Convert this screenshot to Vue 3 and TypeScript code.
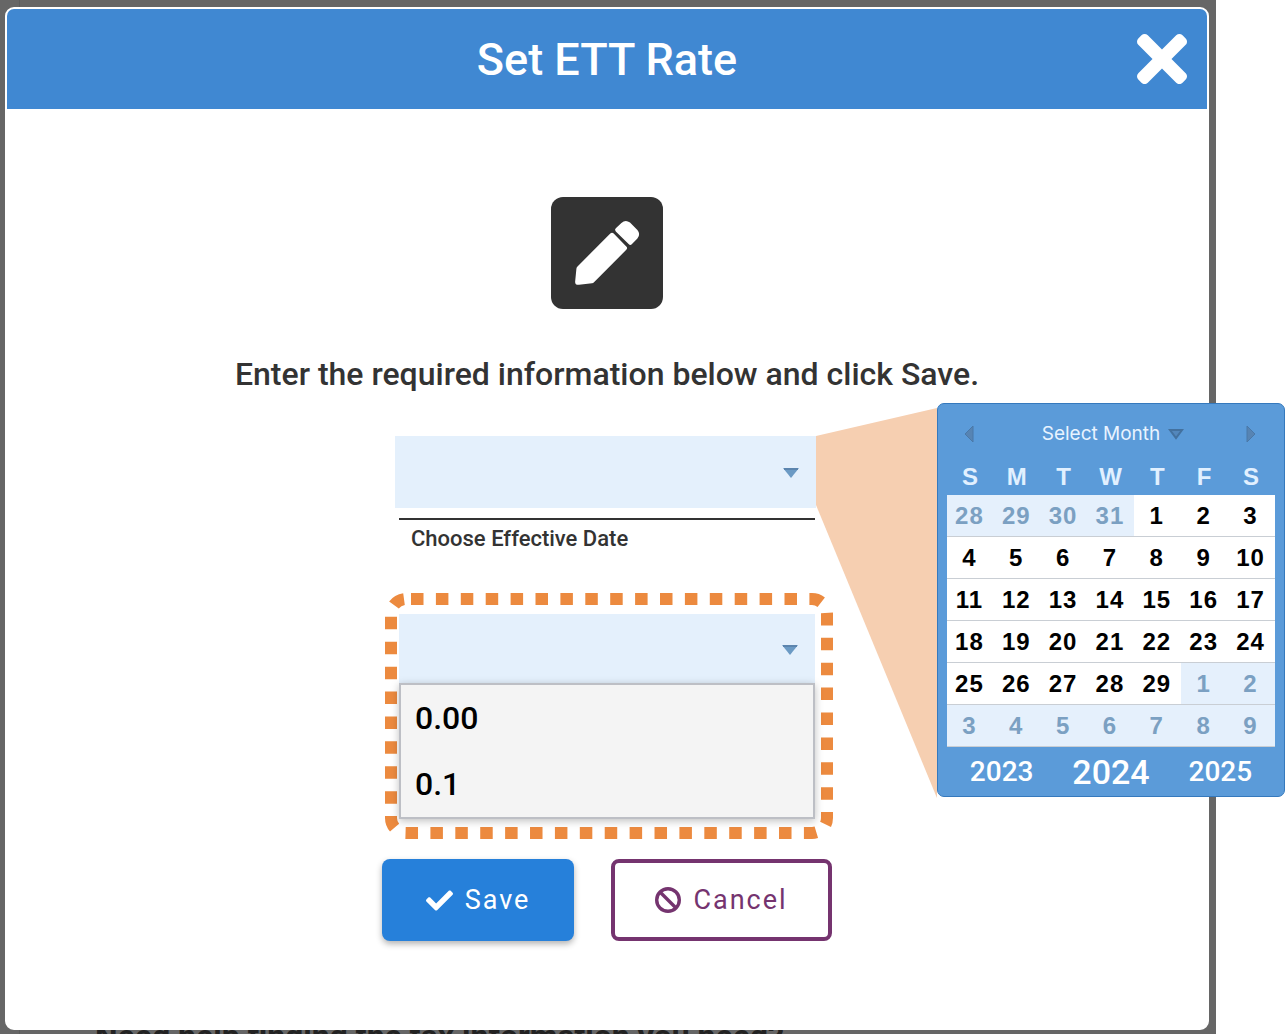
<script setup lang="ts">
import { ref } from 'vue'

interface Day {
  n: number
  out: boolean
}

const weekdays: string[] = ['S', 'M', 'T', 'W', 'T', 'F', 'S']
const years: number[] = [2023, 2024, 2025]
const rates: string[] = ['0.00', '0.1']

const effectiveDate = ref('')
const selectedRate = ref('')
const selectedYear = ref(2024)

const range = (from: number, to: number, out: boolean): Day[] =>
  Array.from({ length: to - from + 1 }, (_, i) => ({ n: from + i, out }))

const days: Day[] = [...range(28, 31, true), ...range(1, 29, false), ...range(1, 9, true)]
const weeks: Day[][] = Array.from({ length: 6 }, (_, w) => days.slice(w * 7, w * 7 + 7))

function pickDay(day: Day): void {
  if (!day.out) effectiveDate.value = `2/${day.n}/${selectedYear.value}`
}
</script>

<template>
  <div class="screen">
    <div class="backdrop">
      <section class="modal" role="dialog" aria-labelledby="modal-title">
        <header class="modal-header">
          <h1 id="modal-title">Set ETT Rate</h1>
          <button class="close" type="button" aria-label="Close">
            <svg viewBox="0 80 352 352" width="50" height="50" aria-hidden="true">
              <path
                fill="#fff"
                d="M242.72 256l100.07-100.07c12.28-12.28 12.28-32.19 0-44.48l-22.24-22.24c-12.28-12.28-32.19-12.28-44.48 0L176 189.28 75.93 89.21c-12.28-12.28-32.19-12.28-44.48 0L9.21 111.45c-12.28 12.28-12.28 32.19 0 44.48L109.28 256 9.21 356.07c-12.28 12.28-12.28 32.19 0 44.48l22.24 22.24c12.28 12.28 32.2 12.28 44.48 0L176 322.72l100.07 100.07c12.28 12.28 32.2 12.28 44.48 0l22.24-22.24c12.28-12.28 12.28-32.19 0-44.48L242.72 256z"
              />
            </svg>
          </button>
        </header>

        <form class="modal-body" @submit.prevent>
          <svg class="edit-icon" viewBox="0 0 112 112" width="112" height="112" aria-hidden="true">
            <rect width="112" height="112" rx="12" fill="#333" />
            <path
              fill="#fff"
              d="M59.3 36.6Q61 34.9 62.7 36.6L75.3 49.4Q77 51.1 75.3 52.8L43 85.2Q42.2 86 41 86.2L28 87.8Q23.6 88.2 24.2 84L25.4 71.8Q25.5 70.4 26.5 69.4Z"
            />
            <path
              fill="#fff"
              d="M64.8 34.4Q63.2 32.8 64.8 31.2L70.4 26Q74.6 22 79 25.6L86.4 33Q90 37.4 86.4 41.5L81 47.1Q79.3 48.8 77.6 47.1Z"
            />
          </svg>
          <p class="prompt">Enter the required information below and click Save.</p>

          <div class="date-group">
            <div class="date-field">
              <input id="effective-date" v-model="effectiveDate" class="control" type="text" readonly />
              <svg class="caret" viewBox="0 0 16 10" width="16" height="10" aria-hidden="true">
                <path d="M0 0H16L8 10Z" fill="#6b9ac4" />
                <path d="M1 1H15" stroke="#5c85ae" stroke-width="2" />
              </svg>

              <svg class="callout" viewBox="0 0 121 395" width="121" height="395" aria-hidden="true">
                <path d="M0 33L121 5V395L0 102Z" fill="#f6cfb1" />
              </svg>

              <div class="calendar">
                <div class="calendar-bar">
                  <button type="button" aria-label="Previous month">
                    <svg viewBox="0 0 10 18" width="10" height="18" aria-hidden="true">
                      <path d="M9 1V17L1 9Z" fill="#5784b3" stroke="#4a78a8" />
                    </svg>
                  </button>
                  <button class="month" type="button">
                    Select Month
                    <svg viewBox="0 0 16 11" width="16" height="11" aria-hidden="true">
                      <path d="M2 1H14L8 9Z" fill="#5387bc" stroke="#43719f" stroke-width="2" />
                    </svg>
                  </button>
                  <button type="button" aria-label="Next month">
                    <svg viewBox="0 0 10 18" width="10" height="18" aria-hidden="true">
                      <path d="M1 1V17L9 9Z" fill="#5784b3" stroke="#4a78a8" />
                    </svg>
                  </button>
                </div>
                <table class="days">
                  <thead>
                    <tr>
                      <th v-for="(d, i) in weekdays" :key="i" scope="col">{{ d }}</th>
                    </tr>
                  </thead>
                  <tbody>
                    <tr v-for="(week, w) in weeks" :key="w">
                      <td v-for="(day, i) in week" :key="i" :class="{ out: day.out }" @click="pickDay(day)">
                        {{ day.n }}
                      </td>
                    </tr>
                  </tbody>
                </table>
                <div class="years">
                  <button
                    v-for="y in years"
                    :key="y"
                    type="button"
                    :class="{ current: y === selectedYear }"
                    @click="selectedYear = y"
                  >
                    {{ y }}
                  </button>
                </div>
              </div>
            </div>
            <label class="date-label" for="effective-date">Choose Effective Date</label>
          </div>

          <div class="rate-group">
            <svg class="highlight" viewBox="0 0 448 246" width="448" height="246" aria-hidden="true">
              <path
                d="M26 6H427A15 15 0 0 1 442 21V225A15 15 0 0 1 427 240H21A15 15 0 0 1 6 225V21A15 15 0 0 1 19 6.1"
                fill="none"
                stroke="#ec8a3f"
                stroke-width="12"
                stroke-dasharray="12.5 12.4"
              />
            </svg>
            <div class="rate-field">
              <select v-model="selectedRate" class="control" aria-label="ETT rate">
                <option value=""></option>
                <option v-for="r in rates" :key="r" :value="r">{{ r }}</option>
              </select>
              <svg class="caret" viewBox="0 0 16 10" width="16" height="10" aria-hidden="true">
                <path d="M0 0H16L8 10Z" fill="#6b9ac4" />
                <path d="M1 1H15" stroke="#5c85ae" stroke-width="2" />
              </svg>
            </div>
            <ul class="rate-list" role="listbox" aria-label="ETT rates">
              <li v-for="r in rates" :key="r" role="option" :aria-selected="r === selectedRate" @click="selectedRate = r">
                {{ r }}
              </li>
            </ul>
          </div>

          <div class="actions">
            <button class="btn save" type="submit">
              <svg viewBox="0 0 512 512" width="27" height="27" aria-hidden="true">
                <path
                  fill="#fff"
                  d="M173.898 439.404l-166.4-166.4c-9.997-9.997-9.997-26.206 0-36.204l36.203-36.204c9.997-9.998 26.207-9.998 36.204 0L192 312.69 432.095 72.596c9.997-9.997 26.207-9.997 36.204 0l36.203 36.204c9.997 9.997 9.997 26.206 0 36.204l-294.4 294.401c-9.998 9.997-26.207 9.997-36.204-.001z"
                />
              </svg>
              <span>Save</span>
            </button>
            <button class="btn cancel" type="button">
              <svg viewBox="0 0 26 26" width="26" height="26" aria-hidden="true">
                <circle cx="13" cy="13" r="11.3" fill="none" stroke="#75346f" stroke-width="3.4" />
                <path d="M5 5L21 21" stroke="#75346f" stroke-width="3.4" />
              </svg>
              <span>Cancel</span>
            </button>
          </div>
        </form>
      </section>
      <p class="page-text">Need help finding the tax information you need?</p>
    </div>
  </div>
</template>

<style>
body {
  margin: 0;
  background: #fff;
}
</style>

<style scoped>
.screen {
  height: 100vh;
  overflow: hidden;
  font-family: Roboto, 'Liberation Sans', sans-serif;
  color: #333;
}

button {
  margin: 0;
  padding: 0;
  border: 0;
  background: none;
  font-family: inherit;
  color: inherit;
  cursor: pointer;
}

svg {
  display: block;
}

.backdrop {
  box-sizing: border-box;
  min-height: 100vh;
  margin-right: 70px;
  padding: 7px 7px 0 5px;
  background: linear-gradient(90deg, transparent 19px, #5c5c5c 19px, #5c5c5c 20px, transparent 20px), #666;
}

.modal {
  position: relative;
  z-index: 1;
  border: 2px solid #fff;
  border-radius: 9px;
  background: #fff;
}

.modal-header {
  display: grid;
  grid-template-columns: 90px 1fr 90px;
  align-items: center;
  height: 100px;
  border-radius: 7px 7px 0 0;
  background: #4088d2;
  color: #fff;
}

.modal-header h1 {
  grid-column: 2;
  margin: 0;
  padding-top: 2px;
  font-size: 45px;
  font-weight: 500;
  line-height: 60px;
  text-align: center;
}

.close {
  justify-self: center;
}

.modal-body {
  display: flex;
  flex-direction: column;
  align-items: center;
  padding: 88px 0 87px;
}

.prompt {
  margin: 45px 0 42px;
  font-size: 32px;
  font-weight: 500;
  line-height: 40px;
  text-align: center;
}

.date-group,
.rate-group {
  position: relative;
  width: 416px;
}

.date-field {
  position: relative;
  height: 72px;
  margin: 0 -1px 10px -4px;
}

.rate-field {
  position: relative;
  height: 69px;
}

.control {
  display: block;
  box-sizing: border-box;
  width: 100%;
  height: 100%;
  margin: 0;
  padding: 0 48px 0 16px;
  border: 0;
  border-radius: 0;
  outline: 0;
  appearance: none;
  background: #e4f0fc;
  font-family: inherit;
  font-size: 32px;
  font-weight: 500;
  color: #000;
}

.caret {
  position: absolute;
  top: 50%;
  right: 17px;
  margin-top: -4px;
}

.date-label {
  display: block;
  padding-left: 12px;
  border-top: 2px solid #333;
  font-size: 22px;
  font-weight: 500;
  line-height: 38px;
}

.rate-group {
  margin-top: 56px;
}

.highlight {
  position: absolute;
  top: -21px;
  left: -14px;
  pointer-events: none;
}

.rate-list {
  position: relative;
  box-sizing: border-box;
  margin: 0;
  padding: 0;
  border: 2px solid #bdbfc5;
  background: #f4f4f4;
  box-shadow: 0 2px 8px rgba(0, 0, 0, 0.25);
  list-style: none;
}

.rate-list li {
  padding-left: 14px;
  font-size: 32px;
  font-weight: 500;
  line-height: 66px;
  color: #000;
  cursor: pointer;
}

.actions {
  display: flex;
  gap: 37px;
  margin-top: 40px;
}

.btn {
  display: flex;
  box-sizing: border-box;
  align-items: center;
  justify-content: center;
  gap: 12px;
  height: 82px;
  border-radius: 8px;
  font-size: 27px;
  letter-spacing: 2px;
}

.save {
  width: 192px;
  background: #2680da;
  box-shadow: 0 3px 6px rgba(0, 0, 0, 0.3);
  color: #fff;
}

.cancel {
  width: 221px;
  border: 4px solid #75346f;
  background: #fff;
  color: #75346f;
}

.callout {
  position: absolute;
  top: -33px;
  left: 421px;
}

.calendar {
  position: absolute;
  top: -33px;
  left: 542px;
  box-sizing: border-box;
  width: 348px;
  padding: 0 9px;
  border: 1px solid #3579bd;
  border-radius: 7px;
  background: #5b9bd9;
  color: #fff;
}

.calendar-bar {
  display: flex;
  box-sizing: border-box;
  align-items: center;
  justify-content: space-between;
  height: 54px;
  padding: 6px 19px 0 17px;
}

.month {
  display: flex;
  align-items: center;
  gap: 8px;
  padding-left: 6px;
  font-family: Inter, sans-serif;
  font-size: 19px;
  line-height: 38px;
  color: #e8f3ff;
}

.days {
  width: 100%;
  border-collapse: separate;
  border-spacing: 0;
  table-layout: fixed;
  font-family: 'Liberation Sans', Arial, sans-serif;
  font-size: 24px;
  font-weight: 700;
  text-align: center;
  letter-spacing: 1px;
}

.days th {
  height: 37px;
  padding: 0;
  color: #e1f0ff;
}

.days td {
  box-sizing: border-box;
  height: 42px;
  padding: 1px 2px 0 0;
  border-bottom: 1px solid #c9ced4;
  background: #fff;
  color: #000;
  cursor: pointer;
}

.days td.out {
  background: #e5f0fc;
  color: #7ba0c2;
}

.years {
  display: grid;
  grid-template-columns: repeat(3, 1fr);
  height: 49px;
  align-items: center;
}

.years button {
  font-size: 28px;
  font-weight: 500;
  line-height: 40px;
}

.years .current {
  font-size: 34px;
}

.page-text {
  margin: -12px 0 0 90px;
  font-size: 32px;
  font-weight: 700;
  line-height: 36px;
  white-space: nowrap;
  color: #222;
}
</style>
